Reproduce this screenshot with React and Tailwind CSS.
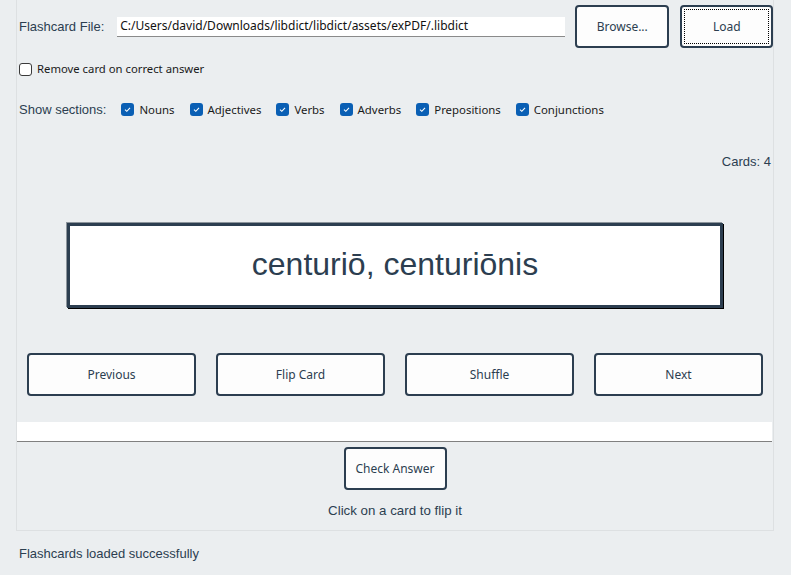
import React from "react";

const ui = { fontFamily: '"Noto Sans", "Open Sans", sans-serif' };
const arial = { fontFamily: '"Liberation Sans", Arial, sans-serif' };

const sections = ["Nouns", "Adjectives", "Verbs", "Adverbs", "Prepositions", "Conjunctions"];

function Check({ checked }) {
    if (!checked) {
        return <span className="block w-[13px] h-[13px] rounded-[3px] border border-[#3a3a3a] bg-white shrink-0" />;
    }
    return (
        <span className="flex items-center justify-center w-[13px] h-[13px] rounded-[3px] bg-[#0a5fb4] shrink-0">
            <svg width="9" height="9" viewBox="0 0 9 9">
                <path d="M2 4.6 L3.8 6.3 L7 2.8" fill="none" stroke="white" strokeWidth="1.1" />
            </svg>
        </span>
    );
}

function Btn({ children, className = "", focus = false }) {
    return (
        <button
            className={`relative flex items-center justify-center border-2 border-[#2c3e50] rounded-[4px] bg-[#fdfdfd] text-[12px] text-[#2c3e50] shrink-0 ${className}`}
            style={ui}
        >
            {focus && <span className="absolute inset-[2px] border border-dotted border-black" />}
            {children}
        </button>
    );
}

export default function App() {
    return (
        <div className="w-[791px] h-[575px] bg-[#ebeef0] overflow-hidden">
            <div className="ml-[16px] w-[758px] border-x border-b border-[#dde0e2] pb-[13px]">
                {/* file row */}
                <div className="flex items-center pt-[5px] pl-[2px]">
                    <span className="text-[13px] text-[#2c3e50] whitespace-nowrap shrink-0" style={arial}>Flashcard File:</span>
                    <div className="ml-[13px] w-[448px] h-[20px] shrink-0 bg-white border-b border-[#8a8a8a] flex items-center px-[3px] text-[12px] text-[#111] whitespace-nowrap overflow-hidden" style={ui}>
                        C:/Users/david/Downloads/libdict/libdict/assets/exPDF/.libdict
                    </div>
                    <Btn className="ml-[10px] w-[94px] h-[43px]">Browse...</Btn>
                    <Btn className="ml-[11px] w-[93px] h-[43px]" focus>Load</Btn>
                </div>

                {/* remove option */}
                <div className="flex items-center gap-[5px] h-[20px] mt-[11px] pl-[2px] text-[11.3px] text-[#1a1a1a]" style={ui}>
                    <Check checked={false} />
                    <span>Remove card on correct answer</span>
                </div>

                {/* sections */}
                <div className="flex items-center h-[20px] mt-[21px] pl-[2px]">
                    <span className="text-[13px] text-[#2c3e50] mr-[15px]" style={arial}>Show sections:</span>
                    {sections.map((s) => (
                        <label key={s} className="flex items-center gap-[5px] mr-[15px] text-[11.4px] text-[#1a1a1a]" style={ui}>
                            <Check checked />
                            <span>{s}</span>
                        </label>
                    ))}
                </div>

                <div className="flex justify-end h-[16px] mt-[32px] pr-[2px] text-[13px] text-[#2c3e50]" style={arial}>
                    Cards: 4
                </div>

                {/* card */}
                <div className="mt-[55px] mx-[50px] h-[85px] pb-[4px] bg-white border-[3px] border-[#2c3e50] shadow-[1px_1px_0_#000,-1px_-1px_0_#8d959c] flex items-center justify-center">
                    <span className="text-[32px] text-[#2c3e50]" style={arial}>centuriō, centuriōnis</span>
                </div>

                {/* controls */}
                <div className="grid grid-cols-4 gap-[20px] px-[10px] mt-[45px]">
                    <Btn className="h-[43px]">Previous</Btn>
                    <Btn className="h-[43px]">Flip Card</Btn>
                    <Btn className="h-[43px]">Shuffle</Btn>
                    <Btn className="h-[43px]">Next</Btn>
                </div>

                <div className="mt-[26px] mr-px h-[20px] bg-white border-b border-[#808080]" />

                <div className="flex justify-center mt-[5px]">
                    <Btn className="w-[103px] h-[43px]">Check Answer</Btn>
                </div>

                <div className="mt-[11px] h-[16px] text-center text-[13.3px] text-[#2c3e50]" style={arial}>
                    Click on a card to flip it
                </div>
            </div>

            <div className="mt-[13px] pl-[19px] text-[13px] text-[#2c3e50]" style={arial}>
                Flashcards loaded successfully
            </div>
        </div>
    );
}
